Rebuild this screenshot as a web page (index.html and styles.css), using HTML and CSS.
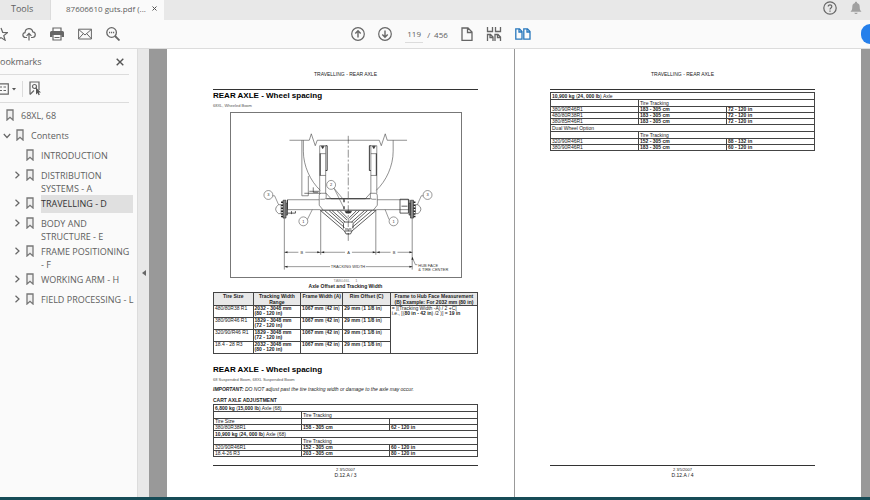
FILE: index.html
```html
<!DOCTYPE html>
<html lang="en">

<head>
    <meta charset="UTF-8">
    <meta name="viewport" content="width=device-width, initial-scale=1.0">
    <title>87606610 guts.pdf</title>
    <link rel="stylesheet" href="styles.css">
</head>

<body>
    <!-- shared icons -->
    <svg class="defs" width="0" height="0" aria-hidden="true">
        <symbol id="bookmark" viewBox="0 0 8 12">
            <path d="M1 1h6v10L4 8.300L1 11z" fill="#f0f0f0" stroke="#777" stroke-width="1.300" />
        </symbol>
        <symbol id="chevron" viewBox="0 0 6 8">
            <path d="M1.500 .8L5 4L1.500 7.200" fill="none" stroke="#666" stroke-width="1.200" />
        </symbol>
        <symbol id="chevron-down" viewBox="0 0 8 6">
            <path d="M.8 1L4 4.500L7.200 1" fill="none" stroke="#666" stroke-width="1.200" />
        </symbol>
    </svg>

    <header class="tabs">
        <button class="tab tab-tools">Tools</button>
        <div class="tab tab-active">
            <span>87606610 guts.pdf (...</span>
            <button class="icon-btn" aria-label="Close tab">
                <svg width="5" height="5" viewBox="0 0 5 5"><path d="M.5.5l4 4M4.500.5l-4 4" stroke="#555" /></svg>
            </button>
        </div>
        <div class="tabs-right">
            <button class="icon-btn" aria-label="Help">
                <svg width="14" height="14" viewBox="0 0 14 14" fill="none" stroke="#666" stroke-width="1.200">
                    <circle cx="7" cy="7" r="6.200" />
                    <path d="M5.200 5.600c0-2.500 3.700-2.300 3.600 0c0 1.400-1.800 1.300-1.800 2.800M7 9.400v1.300" />
                </svg>
            </button>
            <button class="icon-btn" aria-label="Notifications">
                <svg width="12" height="14" viewBox="0 0 12 14" fill="#a0a0a0">
                    <path d="M6 .8c.8 0 1.100.5 1.100 1.200C9.300 2.600 9.700 4.300 9.700 6c0 2.500.5 3.500 1.800 4.800H.5C1.800 9.500 2.300 8.500 2.300 6c0-1.700.4-3.400 2.600-4C4.900 1.300 5.200.8 6 .8zM4.300 11.700h3.400c-.3 1.800-3.100 1.800-3.400 0z" />
                </svg>
            </button>
        </div>
    </header>

    <div class="toolbar">
        <div class="tools-left">
            <button class="icon-btn" aria-label="Star">
                <svg width="8" height="14" viewBox="0 0 8 14"><path d="M1 1l1.700 4.300 4.800.3-3.700 3 1.300 4.600L1 10.600l-4 2.600" fill="none" stroke="#666" stroke-width="1.200" /></svg>
            </button>
            <button class="icon-btn" aria-label="Upload">
                <svg width="14" height="14" viewBox="0 0 14 14" fill="none" stroke="#666" stroke-width="1.200">
                    <path d="M5 10.500H3.500C.2 10.300 0 6 3 5.600C3.300 .6 10 .2 10.700 4.800c3.600.3 3.300 5.500-.2 5.700H9M7 13.500V6.500M4.600 8.800L7 6.400l2.400 2.400" />
                </svg>
            </button>
            <button class="icon-btn" aria-label="Print">
                <svg width="14" height="14" viewBox="0 0 14 14">
                    <path d="M0 5.500Q0 4 1.500 4h11Q14 4 14 5.500V10h-2.500V8h-9v2H0z" fill="#666" />
                    <path d="M3 4V1h8v3M3 8v5h8V8M4.500 10.500h5" fill="none" stroke="#666" stroke-width="1.200" />
                </svg>
            </button>
            <button class="icon-btn" aria-label="Mail">
                <svg width="14" height="14" viewBox="0 0 14 14" fill="none" stroke="#666">
                    <path d="M.6 2.200h12.800v9.800H.6zM.6 2.400L7 8l6.400-5.600M.6 11.800l4.700-5.200M13.400 11.800L8.700 6.600" />
                </svg>
            </button>
            <button class="icon-btn" aria-label="Find">
                <svg width="14" height="14" viewBox="0 0 14 14" fill="none" stroke="#666" stroke-width="1.300">
                    <circle cx="5.600" cy="5.500" r="4.800" />
                    <path d="M9 9l4.500 4.500" stroke-width="1.800" />
                    <path d="M3 5.500h1.200M5 5.500h1.200M7 5.500h1.200" />
                </svg>
            </button>
        </div>
        <div class="tools-mid">
            <button class="icon-btn" aria-label="Previous page">
                <svg width="14" height="14" viewBox="0 0 14 14" fill="none" stroke="#666" stroke-width="1.200">
                    <circle cx="7" cy="7" r="6.300" /><path d="M7 10.500V4M4.300 6.500L7 3.800l2.700 2.700" stroke-width="1.400" />
                </svg>
            </button>
            <button class="icon-btn" aria-label="Next page">
                <svg width="14" height="14" viewBox="0 0 14 14" fill="none" stroke="#666" stroke-width="1.200">
                    <circle cx="7" cy="7" r="6.300" /><path d="M7 3.500V10M4.300 7.500L7 10.200l2.700-2.700" stroke-width="1.400" />
                </svg>
            </button>
            <div class="page-count">
                <input type="text" value="119" aria-label="Page number">
                <span>/</span>
                <span>456</span>
            </div>
            <button class="icon-btn" aria-label="Single page">
                <svg width="12" height="14" viewBox="0 0 12 14" fill="none" stroke="#666" stroke-width="1.300">
                    <path d="M1 1h6l4 4v8.300H1zM6.500 1v4.500H11" />
                </svg>
            </button>
            <button class="icon-btn" aria-label="Continuous pages">
                <svg width="16" height="14" viewBox="0 0 16 14" fill="none" stroke="#666" stroke-width="1.300">
                    <path d="M1.500 0v4.500h5V0M9.500 0v4.500h5V0M1.500 14V7.500h3L7 10v4M4 7.500v3h3M9 14V7.500h3l2.500 2.500v4M11.500 7.500v3h3" />
                </svg>
            </button>
            <button class="icon-btn" aria-label="Two pages">
                <svg width="16" height="12" viewBox="0 0 16 12" fill="none" stroke="#2878bd" stroke-width="1.300">
                    <path d="M.8.8h3.700L7 3.500v7.700H.8zM4 .8V4h3M8.800.8h3.700L15 3.500v7.700H8.800zM12 .8V4h3" />
                </svg>
            </button>
        </div>
        <div class="tools-right">
            <button class="share" aria-label="Share"></button>
        </div>
    </div>

    <div class="workspace">
        <aside class="sidebar">
            <div class="side-head">
                <h2>ookmarks</h2>
                <button class="icon-btn" aria-label="Close panel">
                    <svg width="8" height="8" viewBox="0 0 8 8"><path d="M.7.7l6.600 6.600M7.300.7L.7 7.300" stroke="#555" stroke-width="1.400" /></svg>
                </button>
            </div>
            <div class="side-tools">
                <button class="icon-btn" aria-label="Options">
                    <svg width="16" height="12" viewBox="0 0 16 12">
                        <path d="M0 .8h8.300v10.400H0M0 4h2M3.500 4H6M0 7.500h2M3.500 7.500H6" fill="none" stroke="#666" stroke-width="1.200" />
                        <path d="M12 5h4l-2 2.400z" fill="#555" />
                    </svg>
                </button>
                <button class="icon-btn find-mark" aria-label="Find bookmark">
                    <svg width="13" height="15" viewBox="0 0 13 15" fill="none" stroke="#666" stroke-width="1.200">
                        <path d="M1 13.500V1h9v8M1 13.500L5 9.500" /><circle cx="5.500" cy="5.500" r="2" />
                        <path d="M7 6.500v7l1.600-1.500 1 2.300 1.200-.5-1-2.200h2.200z" fill="#555" stroke="none" />
                    </svg>
                </button>
            </div>
            <ul class="tree">
                <li class="level-1"><span class="arrow"></span><svg class="mark"><use href="#bookmark" /></svg><a href="#">68XL, 68</a></li>
                <li class="level-2"><span class="arrow"><svg width="8" height="6"><use href="#chevron-down" /></svg></span><svg class="mark"><use href="#bookmark" /></svg><a href="#">Contents</a></li>
                <li class="level-3"><span class="arrow"></span><svg class="mark"><use href="#bookmark" /></svg><a href="#">INTRODUCTION</a></li>
                <li class="level-3"><span class="arrow"><svg width="6" height="8"><use href="#chevron" /></svg></span><svg class="mark"><use href="#bookmark" /></svg><a href="#">DISTRIBUTION<br>SYSTEMS - A</a></li>
                <li class="level-3 selected"><span class="arrow"><svg width="6" height="8"><use href="#chevron" /></svg></span><svg class="mark"><use href="#bookmark" /></svg><a href="#">TRAVELLING - D</a></li>
                <li class="level-3"><span class="arrow"><svg width="6" height="8"><use href="#chevron" /></svg></span><svg class="mark"><use href="#bookmark" /></svg><a href="#">BODY AND<br>STRUCTURE - E</a></li>
                <li class="level-3"><span class="arrow"><svg width="6" height="8"><use href="#chevron" /></svg></span><svg class="mark"><use href="#bookmark" /></svg><a href="#">FRAME POSITIONING<br>- F</a></li>
                <li class="level-3"><span class="arrow"><svg width="6" height="8"><use href="#chevron" /></svg></span><svg class="mark"><use href="#bookmark" /></svg><a href="#">WORKING ARM - H</a></li>
                <li class="level-3"><span class="arrow"><svg width="6" height="8"><use href="#chevron" /></svg></span><svg class="mark"><use href="#bookmark" /></svg><a href="#">FIELD PROCESSING - L</a></li>
            </ul>
        </aside>
        <button class="collapse" aria-label="Collapse panel">
            <svg width="4" height="6" viewBox="0 0 4 6"><path d="M4 0v6L0 3z" fill="#666" /></svg>
        </button>

        <main class="viewer">
            <article class="page page-left">
                <div class="page-header">TRAVELLING - REAR AXLE</div>
                <h1>REAR AXLE - Wheel spacing</h1>
                <p class="model">68XL, Wheeled Boom</p>
                <figure>
                    <svg class="drawing" viewBox="230 112 232 165" fill="none" stroke="#444" stroke-width=".6">
                        <!-- one half of the axle, mirrored for the other side -->
                        <g id="half">
                            <path d="M289 139.500h20l2-6.500 4 12 2-5.500h31.500" />
                            <path d="M303 139.500v11c0 15 7 30 17 39.500" />
                            <path d="M319.500 193v-48h6v48M319.500 153h6M319.500 175h6" />
                            <path d="M320 153v22M325.500 145h1.500v25h-1.500" stroke="#222" stroke-width=".9" />
                            <path d="M321 145.500h3l-1.500 2.500z" fill="#222" />
                            <path d="M319 195q0-2 2-2h5l5 5.500h18M287 199.500h32M287 209.500h33M319 195v10l4 5M326 193v4q0 2-2 2h-4" />
                            <path d="M287 199.500v10M320 210h28.500M326 198.500h22" stroke="#222" stroke-width=".9" />
                            <path d="M320.500 210.500l24 20.500h4M324.500 210.500l20 17M329 210.500l14.500 13v5M332 210.500l13 11.500M337 210.500l10 9.500M340 210.500l8 8M343.500 222h5M344.500 231l1.500 3h3M345 229h3" stroke="#333" stroke-width=".8" />
                            <path d="M345 211h4v2h-3z" fill="#222" />
                            <path d="M282.500 200v18h3v-18zM285.500 203h1.500v12h-1.500" fill="#888" stroke="#222" />
                            <path d="M280.500 202h2M280.500 205h2M280.500 208h2M280.500 211h2M280.500 214h2M280.500 216.500h2" stroke="#222" stroke-width="1.500" />
                            <path d="M280.500 204.500h-2.500q-3 2-3 4.500t3 4.500h2.500z" />
                            <path d="M283.800 218v52M320.500 210v45" />
                        </g>
                        <use href="#half" transform="translate(696.600 0) scale(-1 1)" />
                        <path d="M348.300 135v108" stroke-dasharray="8 2 2 2" />
                        <path d="M301.500 139.500v56h6.500v-20" />
                        <path d="M304 193h16M309 191h10M313 187v5h5" stroke="#222" />
                        <path d="M400.500 199v14h8.500v-14zM402 206h6M287 213h8v-2M291 211v3" stroke="#333" stroke-width=".8" />
                        <path d="M344 199v3M344 206v3" stroke="#222" stroke-width="1.200" />
                        <g stroke="#555">
                            <circle cx="267.700" cy="194.700" r="4.500" />
                            <circle cx="303" cy="221.300" r="4.500" />
                            <circle cx="331" cy="184.500" r="4.500" />
                            <circle cx="428.300" cy="194.700" r="4.500" />
                            <circle cx="394" cy="221.300" r="4.500" />
                            <path d="M272 195.500h2l4 9M307 219.500l5-10M334 188l10 12M334 188l10 20M424 195.500h-2l-4 9M389.500 219.500l-4-10" />
                            <path d="M284 252.500h14M305 252.500h40M352 252.500h39M398 252.500h15M284 267h46M366 267h47M413 258l3 7h2" />
                        </g>
                        <path d="M284 252.500l3-1v2zM320 252.500l-3-1v2zM321 252.500l3-1v2zM376 252.500l-3-1v2zM377 252.500l3-1v2zM413 252.500l-3-1v2zM284 267l3-1v2zM413 267l-3-1v2zM413 257l-1 3h2z" fill="#222" stroke="none" />
                        <g class="labels">
                            <text x="267.700" y="196">3</text>
                            <text x="303" y="223">1</text>
                            <text x="331" y="186">2</text>
                            <text x="428.300" y="196">3</text>
                            <text x="394" y="223">1</text>
                            <text x="301.500" y="254">B</text>
                            <text x="348.500" y="254">A</text>
                            <text x="394.500" y="254">B</text>
                            <text x="348" y="268.500">TRACKING WIDTH</text>
                            <text x="419" y="267" class="start">HUB FACE</text>
                            <text x="419" y="271" class="start">&amp; TIRE CENTER</text>
                        </g>
                    </svg>
                    <figcaption>
                        <small>TAB046L &nbsp; &nbsp; 1</small>
                        <b>Axle Offset and Tracking Width</b>
                    </figcaption>
                </figure>

                <table class="offsets">
                    <colgroup><col class="c-tire"><col class="c-range"><col class="c-frame"><col class="c-rim"><col></colgroup>
                    <thead>
                        <tr><th>Tire Size</th><th>Tracking Width<br>Range</th><th>Frame Width (A)</th><th>Rim Offset (C)</th><th>Frame to Hub Face Measurement<br>(B) Example: For 2032 mm (80 in)</th></tr>
                    </thead>
                    <tbody>
                        <tr>
                            <td>480/80R38 R1</td><td><b>2032 - 3048 mm<br>(80 - 120 in)</b></td><td><b>1067 mm</b> (<b>42 in</b>)</td><td><b>29 mm</b> (<b>1 1/8 in</b>)</td>
                            <td rowspan="4">= [(Tracking Width -A) / 2 +C]<br>i.e., [(<b>80 in - 42 in</b>) /2 )] = <b>19 in</b></td>
                        </tr>
                        <tr><td>380/90R46 R1</td><td><b>1829 - 3048 mm<br>(72 - 120 in)</b></td><td><b>1067 mm</b> (<b>42 in</b>)</td><td><b>29 mm</b> (<b>1 1/8 in</b>)</td></tr>
                        <tr><td>320/90/R46 R1</td><td><b>1829 - 3048 mm<br>(72 - 120 in)</b></td><td><b>1067 mm</b> (<b>42 in</b>)</td><td><b>29 mm</b> (<b>1 1/8 in</b>)</td></tr>
                        <tr><td>18.4 - 28 R3</td><td><b>2032 - 3048 mm<br>(80 - 120 in)</b></td><td><b>1067 mm</b> (<b>42 in</b>)</td><td><b>29 mm</b> (<b>1 1/8 in</b>)</td></tr>
                    </tbody>
                </table>

                <h1>REAR AXLE - Wheel spacing</h1>
                <p class="model">68 Suspended Boom, 68XL Suspended Boom</p>
                <p class="important"><b>IMPORTANT:</b> DO NOT adjust past the tire tracking width or damage to the axle may occur.</p>
                <h3>CART AXLE ADJUSTMENT</h3>
                <table class="tracking">
                    <tr class="tall"><td colspan="3"><b>6,800 kg</b> (<b>15,000 lb</b>) Axle (68)</td></tr>
                    <tr class="tall"><td></td><td colspan="2">Tire Tracking</td></tr>
                    <tr><td>Tire Size</td><td></td><td></td></tr>
                    <tr><td>380/80R38R1</td><td><b>158 - 305 cm</b></td><td><b>62 - 120 in</b></td></tr>
                    <tr class="tall"><td colspan="3"><b>10,900 kg</b> (<b>24, 000 lb</b>) Axle (68)</td></tr>
                    <tr class="tall"><td></td><td colspan="2">Tire Tracking</td></tr>
                    <tr><td>320/90R46R1</td><td><b>152 - 305 cm</b></td><td><b>60 - 120 in</b></td></tr>
                    <tr><td>18.4-26 R3</td><td><b>203 - 305 cm</b></td><td><b>80 - 120 in</b></td></tr>
                </table>
                <footer><small>2 3/5/2007</small><span>D.12.A / 3</span></footer>
            </article>

            <article class="page page-right">
                <div class="page-header">TRAVELLING - REAR AXLE</div>
                <table class="tracking">
                    <tr class="tall"><td colspan="3"><b>10,900 kg</b> (<b>24, 000 lb</b>) Axle</td></tr>
                    <tr class="tall"><td></td><td colspan="2">Tire Tracking</td></tr>
                    <tr><td>380/90R46R1</td><td><b>183 - 305 cm</b></td><td><b>72 - 120 in</b></td></tr>
                    <tr><td>480/80R38R1</td><td><b>183 - 305 cm</b></td><td><b>72 - 120 in</b></td></tr>
                    <tr><td>380/85R46R1</td><td><b>183 - 305 cm</b></td><td><b>72 - 120 in</b></td></tr>
                    <tr class="tall"><td colspan="3">Dual Wheel Option</td></tr>
                    <tr class="tall"><td></td><td colspan="2">Tire Tracking</td></tr>
                    <tr><td>320/90R46R1</td><td><b>152 - 305 cm</b></td><td><b>88 - 132 in</b></td></tr>
                    <tr><td>380/90R46R1</td><td><b>183 - 305 cm</b></td><td><b>60 - 120 in</b></td></tr>
                </table>
                <footer><small>2 3/5/2007</small><span>D.12.A / 4</span></footer>
            </article>
        </main>
    </div>
    <div class="taskbar"></div>
</body>

</html>
```
FILE: styles.css
```css
* {
    box-sizing: border-box;
}

body {
    margin: 0;
    height: 100vh;
    display: flex;
    flex-direction: column;
    overflow: hidden;
    font-family: "Open Sans", "Noto Sans", sans-serif;
    font-size: 9px;
    line-height: 13px;
    color: #606060;
    background: #fafafa;
}

button,
input {
    font: inherit;
    color: inherit;
    border: none;
    background: none;
    padding: 0;
    margin: 0;
}

svg {
    display: block;
    flex-shrink: 0;
}

.defs {
    position: absolute;
}

.icon-btn {
    display: flex;
    align-items: center;
    cursor: pointer;
}

/* tab strip */
.tabs {
    display: flex;
    height: 20px;
    flex-shrink: 0;
    background: #e8e8e8;
}

.tab {
    display: flex;
    align-items: center;
    padding-bottom: 3px;
}

.tab-tools {
    width: 51px;
    padding-left: 11px;
    font-size: 9px;
    border-right: 1px solid #dcdcdc;
}

.tab-active {
    width: 113px;
    padding-left: 15px;
    gap: 6px;
    font-size: 8px;
    background: #fafafa;
}

.tab-active span {
    white-space: nowrap;
}

.tabs-right {
    display: flex;
    align-items: center;
    gap: 13px;
    margin-left: auto;
    padding: 0 8px 4px 0;
}

/* toolbar */
.toolbar {
    display: flex;
    align-items: center;
    height: 29px;
    flex-shrink: 0;
    border-bottom: 1px solid #dcdcdc;
}

.tools-left {
    flex: 1;
    display: flex;
    gap: 14px;
}

.tools-mid {
    display: flex;
    align-items: center;
    gap: 13px;
    padding-left: 12px;
}

.page-count {
    display: flex;
    align-items: center;
    gap: 4px;
    font-size: 8px;
}

.page-count input {
    width: 18px;
    height: 17px;
    text-align: center;
    border-bottom: 1px solid #dcdcdc;
}

.tools-right {
    flex: 1;
    display: flex;
    justify-content: flex-end;
    overflow: hidden;
}

.share {
    width: 9px;
    height: 20px;
    border-radius: 10px 0 0 10px;
    background: #2680eb;
}

/* bookmarks panel */
.workspace {
    flex: 1;
    display: flex;
    min-height: 0;
}

.sidebar {
    width: 137px;
    flex-shrink: 0;
    padding-right: 8px;
}

.side-head {
    display: flex;
    align-items: center;
    justify-content: space-between;
    height: 26px;
    padding-right: 5px;
    border-bottom: 1px solid #dcdcdc;
}

.side-head h2 {
    margin: 0;
    font-size: 9px;
    font-weight: normal;
}

.side-tools {
    display: flex;
    align-items: center;
    gap: 6px;
    height: 28px;
    border-bottom: 1px solid #dcdcdc;
}

.find-mark {
    height: 16px;
    padding-left: 6px;
    border-left: 1px solid #dcdcdc;
}

.tree {
    list-style: none;
    margin: 0;
    padding: 4px 0 0;
}

.tree li {
    display: flex;
    min-height: 20px;
    margin-right: -4px;
}

.level-2 {
    padding-left: 3px;
}

.level-3 {
    padding-left: 14px;
}

.arrow {
    width: 12px;
    flex-shrink: 0;
    padding-top: 4px;
}

.level-1 .arrow {
    width: 6px;
}

.level-2 .arrow {
    width: 13px;
    padding-top: 6px;
}

.mark {
    width: 8px;
    height: 12px;
    margin: 2px 7px 0 0;
}

.tree a {
    flex: 1;
    min-height: 18px;
    padding-top: 2px;
    color: inherit;
    text-decoration: none;
    white-space: nowrap;
}

.tree .selected a {
    margin-bottom: 2px;
    background: #e0e0e0;
    color: #333;
}

.collapse {
    width: 12px;
    flex-shrink: 0;
    display: flex;
    align-items: center;
    justify-content: center;
    background: #e8e8e8;
    border-left: 1px solid #dcdcdc;
}

/* document */
.viewer {
    flex: 1;
    display: flex;
    min-width: 0;
    gap: 1px;
    padding: 0 9px 0 18px;
    background: #999;
}

.page {
    flex: 1;
    min-width: 0;
    display: flex;
    flex-direction: column;
    padding: 22px 36px 19px 46px;
    background: #fff;
    font-family: "Liberation Sans", Arial, sans-serif;
    font-size: 5px;
    line-height: 6px;
    color: #222;
}

.page-right {
    padding-left: 35px;
    padding-right: 46px;
}

.page-header {
    height: 19px;
    flex-shrink: 0;
    text-align: center;
    border-bottom: 1px solid #333;
}

.page h1 {
    margin: 1px 0 2px;
    font-size: 8px;
    line-height: 10px;
    color: #000;
}

.page p {
    margin: 0;
}

.page .model {
    font-size: 4px;
    line-height: 5px;
    color: #555;
}

.page small {
    font-size: 4px;
    line-height: 5px;
}

figure {
    margin: 4px 0 3px;
}

.drawing {
    width: auto;
    margin: 0 16px 0 17px;
    border: 1px solid #777;
}

.labels {
    fill: #333;
    stroke: none;
    font-size: 4px;
    text-anchor: middle;
}

.labels .start {
    text-anchor: start;
}

figcaption {
    display: flex;
    flex-direction: column;
    align-items: center;
}

figcaption small {
    color: #888;
}

.page table {
    width: 100%;
    table-layout: fixed;
    border-collapse: collapse;
}

.page th,
.page td {
    padding: 0 1px;
    border: 1px solid #444;
    text-align: left;
    vertical-align: top;
    white-space: nowrap;
}

.page th {
    text-align: center;
    background: #e8e8e8;
}

.offsets td {
    height: 12px;
    line-height: 5px;
}

.c-tire {
    width: 15%;
}

.c-range,
.c-rim {
    width: 18%;
}

.c-frame {
    width: 16%;
}

.offsets + h1 {
    margin-top: 11px;
}

.page .important {
    margin-top: 4px;
    font-style: italic;
}

.page h3 {
    margin: 5px 0 1px;
    font-size: 5px;
}

.tracking td {
    height: 6px;
    line-height: 5px;
}

.tracking .tall td {
    height: 7px;
    line-height: 6px;
}

.page-right .tracking {
    margin-top: 2px;
}

.page footer {
    display: flex;
    flex-direction: column;
    align-items: center;
    margin-top: auto;
    padding-top: 1px;
    border-top: 1px solid #333;
}

/* strip along the bottom of the screen */
.taskbar {
    height: 3px;
    flex-shrink: 0;
    background: #174c57;
}
```
